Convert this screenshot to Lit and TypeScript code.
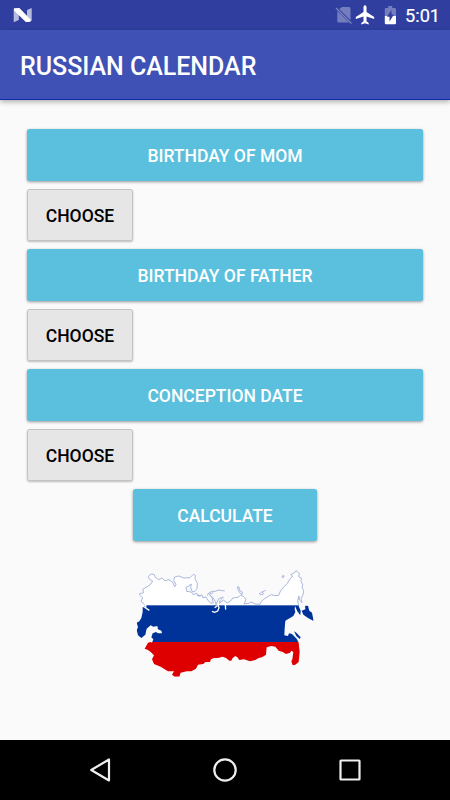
import { LitElement, html, css } from "lit";
import { customElement } from "lit/decorators.js";

const LAND =
  "M38 136 L46 131 L40 124 L33 118 L38 108 L30 100 L28 96 L41 92 L38 82 L50 75 L61 68 L68 57 L58 51 L55 44 L62 36 L72 37 L76 46 L86 53 L96 48 L104 56 L117 53 L128 61 L134 74 L138 68 L131 55 L134 45 L146 42 L162 48 L180 47 L190 37 L196 40 L195 50 L202 64 L201 80 L192 90 L186 88 L182 76 L184 66 L176 72 L168 76 L170 88 L184 90 L190 98 L200 94 L206 101 L216 99 L218 107 L228 105 L234 116 L243 124 L250 122 L246 106 L239 99 L248 106 L256 118 L258 128 L266 110 L280 105 L270 116 L268 124 L280 114 L292 123 L304 115 L308 108 L324 106 L332 100 L340 103 L348 112 L342 126 L356 124 L364 120 L375 126 L390 127 L394 118 L404 110 L412 105 L424 98 L434 101 L446 100 L452 86 L462 74 L472 64 L478 54 L488 42 L482 38 L494 32 L498 26 L508 34 L506 44 L514 48 L513 58 L518 68 L516 76 L521 86 L519 98 L513 110 L516 122 L508 114 L507 102 L503 116 L506 132 L512 146 L511 160 L502 148 L495 132 L494 142 L496 150 L490 162 L480 168 L466 176 L464 200 L463 220 L474 222 L477 214 L486 216 L500 230 L506 242 L509 270 L506 300 L496 308 L488 310 L484 298 L487 292 L490 270 L484 266 L480 272 L468 276 L458 270 L446 266 L436 254 L424 252 L410 256 L408 278 L396 286 L386 288 L376 294 L360 298 L342 292 L328 294 L322 286 L316 282 L308 288 L304 296 L298 296 L288 288 L278 284 L264 288 L252 288 L243 292 L240 300 L226 300 L220 306 L204 308 L198 320 L184 328 L170 328 L152 332 L148 344 L134 344 L126 338 L132 328 L114 328 L104 322 L92 314 L72 306 L66 292 L72 280 L62 270 L54 264 L44 260 L54 242 L62 240 L66 242 L70 232 L64 226 L68 214 L78 210 L84 214 L96 214 L94 206 L84 202 L82 192 L70 194 L62 190 L50 200 L46 218 L34 228 L24 220 L20 204 L24 196 L20 182 L28 178 L34 168 L38 150 Z";

const CHUKOTKA =
  "M525 131 L534 131 L538 146 L546 152 L551 177 L534 168 L520 158 L515 146 L526 142 Z";

const INLETS =
  "M246 148 l8 3 9 -4 4 -10 -3 -9 M254 137 l8 -6 M286 128 l1 15 M38 132 L58 145 M46 126 l2 12";

const ISLANDS =
  "M233 101 L234 95 L246 88 L256 88 L266 84 L284 87 M237 97 L250 92 M322 75 l4 -1 4 12 7 4 -1 8 -8 -7 -3 -8 z M387 96 l8 -6 5 3 M390 99 l12 -4 M396 90 l11 -5 M456 43 l5 -3 1 5 -5 2 z M200 98 l4 4 8 0";

@customElement("status-bar")
class StatusBar extends LitElement {
  static styles = css`
    :host { display: flex; align-items: center; height: 30px; background: #303f9f; flex: none; color: #fff; }
    .logo { margin-left: 12px; }
    .sym { margin-left: auto; }
    .time { font: 400 18.2px/30px Roboto, sans-serif; width: 45px; margin: 2px 0 0 6px; -webkit-text-stroke: 0.2px #fff; }
    svg { display: block; }
  `;
  render() {
    return html`
      <svg class="logo" width="22" height="30" viewBox="0 0 22 30">
        <path d="M1.7 9.5 3 8.2V21.6L1.7 22.3ZM3 10 6.8 14V20L1.7 22.3V9ZM19.7 8V20.8L15 16V10Z" fill="#fff" opacity=".65" />
        <path d="M2 8.3 7.3 8 19.5 20.2 17.8 21.9H13.8L2 10.5Z" fill="#fff" />
      </svg>
      <svg class="sym" width="64" height="30" viewBox="335 0 64 30">
        <path d="M342 7h7q1.5 0 1.5 1.5V20.3L339.2 9ZM337.3 11 349 22.5h-10.2q-1.5 0-1.5-1.5Z" fill="#fff" opacity=".33" />
        <path d="M336 8 351.5 23.5" stroke="#fff" stroke-width="1.2" opacity=".36" />
        <path d="M365 5.3q1.5 0 1.5 2V12l7.7 5v2l-7.7-2.4v4.6l2.2 1.7v1.5l-3.7-1.1-3.7 1.1v-1.5l2.2-1.7v-4.6l-7.7 2.4v-2l7.7-5V7.3q0-2 1.5-2Z" fill="#fff" />
        <path d="M388.2 6h4v2h2.6q1.2 0 1.2 1.2V16h-11.2V9.2q0-1.2 1.2-1.2h2.2Z" fill="#fff" opacity=".33" />
        <path d="M384.8 16H396v7q0 1.2-1.2 1.2H386q-1.2 0-1.2-1.2Z" fill="#fff" />
        <path d="M391.5 10v4.6h2.4l-4.4 7v-4.8H387Z" fill="#303f9f" />
      </svg>
      <div class="time">5:01</div>
    `;
  }
}

@customElement("russia-map")
class RussiaMap extends LitElement {
  static styles = css`
    :host { display: block; width: 190px; height: 120px; }
    svg { display: block; }
  `;
  render() {
    return html`
      <svg width="190" height="120" viewBox="0 0 570 360">
        <defs>
          <clipPath id="land"><path d=${LAND} /><path d=${CHUKOTKA} /></clipPath>
          <clipPath id="north"><rect width="570" height="130" /></clipPath>
        </defs>
        <path d=${LAND} fill="#fff" stroke="#9dadd8" stroke-width="2.6" stroke-linejoin="round" clip-path="url(#north)" />
        <g clip-path="url(#land)">
          <rect y="130" width="570" height="110" fill="#003399" />
          <rect y="240" width="570" height="120" fill="#de0000" />
        </g>
        <path d="M492 208 L499 212 L512 226 L509 231 L499 222 Z" fill="#003399" />
        <path d=${INLETS} fill="none" stroke="#fff" stroke-width="4" />
        <path d=${ISLANDS} fill="none" stroke="#9dadd8" stroke-width="2.6" />
      </svg>
    `;
  }
}

@customElement("app-root")
class AppRoot extends LitElement {
  static styles = css`
    :host { display: flex; flex-direction: column; width: 450px; height: 800px; background: #fafafa; font-family: Roboto, sans-serif; overflow: hidden; }
    .title { box-sizing: border-box; height: 70px; flex: none; padding-left: 20px; background: #3f51b5; border-bottom: 1px solid #0a2fa8; color: #fff; font-size: 25px; font-weight: 500; letter-spacing: -0.03px; line-height: 74px; box-shadow: 0 2px 5px rgba(0,0,0,.3); }
    .body { flex: 1; display: flex; flex-direction: column; align-items: flex-start; gap: 8px; padding: 29px 27px 0; }
    button { box-sizing: border-box; height: 52px; flex: none; padding: 2px 0 0; border: 0; border-radius: 2.5px; font: 500 17.5px/50px Roboto, sans-serif; color: #fff; background: #5bc0de; box-shadow: 0 1px 3px rgba(0,0,0,.4); }
    .wide { width: 396px; }
    .choose { width: 106px; color: #000; background: #e6e6e6; border: 1px solid #c4c4c4; padding: 1px 0 0; box-shadow: 0 1px 2px rgba(0,0,0,.25); }
    .calc { width: 184px; margin-left: 106px; }
    russia-map { margin: 13px 0 0 103px; }
    .nav { height: 60px; flex: none; background: #000; }
    .nav svg { display: block; }
  `;
  render() {
    const fields = ["BIRTHDAY OF MOM", "BIRTHDAY OF FATHER", "CONCEPTION DATE"];
    return html`
      <status-bar></status-bar>
      <div class="title">RUSSIAN CALENDAR</div>
      <div class="body">
        ${fields.map((f) => html`<button class="wide">${f}</button><button class="choose">CHOOSE</button>`)}
        <button class="calc">CALCULATE</button>
        <russia-map></russia-map>
      </div>
      <div class="nav">
        <svg width="450" height="60" viewBox="0 740 450 60" fill="none" stroke="#eee" stroke-width="2.2" stroke-linejoin="round">
          <path d="M109 759.5V780.5L91.2 770Z" />
          <circle cx="225" cy="770" r="10.7" />
          <rect x="340.5" y="760.5" width="19" height="19" rx=".5" />
        </svg>
      </div>
    `;
  }
}
